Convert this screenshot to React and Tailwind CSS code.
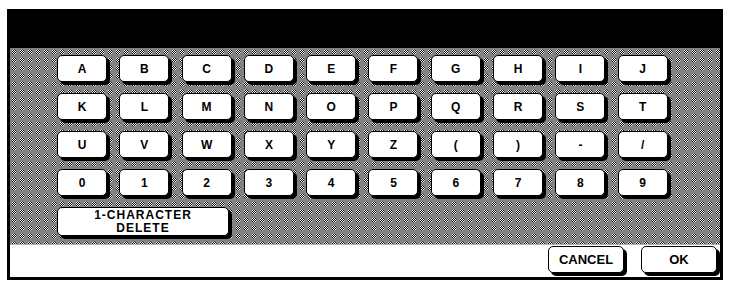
import React from 'react';

const rows = [
    ['A', 'B', 'C', 'D', 'E', 'F', 'G', 'H', 'I', 'J'],
    ['K', 'L', 'M', 'N', 'O', 'P', 'Q', 'R', 'S', 'T'],
    ['U', 'V', 'W', 'X', 'Y', 'Z', '(', ')', '-', '/'],
    ['0', '1', '2', '3', '4', '5', '6', '7', '8', '9'],
];

function Key({ children, className = 'w-[50px] h-[27px] leading-[12px]' }) {
    return (
        <button
            className={`${className} shrink-0 rounded-[5px] border border-black bg-white shadow-[3px_3px_0_#000] flex flex-col items-center justify-center text-[12px] font-bold text-black`}
        >
            {children}
        </button>
    );
}

export default function App() {
    return (
        <div className="w-[732px] h-[287px] bg-white pt-[9px] pl-[7px] font-['Liberation_Sans',Arial,sans-serif]">
            <div className="w-[716px] h-[271px] bg-black px-[3px] pb-[3px] flex flex-col">
                {/* input display */}
                <div className="h-[39px] shrink-0" />

                {/* keyboard */}
                <div className="h-[196px] shrink-0 pt-[7px] pl-[47px] flex flex-col gap-y-[11px] bg-[image:radial-gradient(circle,transparent_2px,#828282_3px),conic-gradient(#000_25%,#fff_0_50%,#000_0_75%,#fff_0)] bg-size-[8px_8px,2px_2px]">
                    {rows.map((row, i) => (
                        <div key={i} className="flex gap-x-[12.3px]">
                            {row.map(ch => (
                                <Key key={ch}>{ch}</Key>
                            ))}
                        </div>
                    ))}
                    <div className="flex">
                        <Key className="w-[172px] h-[29px] leading-[13px] tracking-[1px]">
                            <span>1-CHARACTER</span>
                            <span>DELETE</span>
                        </Key>
                    </div>
                </div>

                {/* actions */}
                <div className="flex-1 bg-white border-t border-[#b0b0b0] flex justify-end items-start pt-[1px] pr-[3px] gap-x-[17px]">
                    <Key className="w-[76px] h-[27px] leading-[12px] text-[13px]">CANCEL</Key>
                    <Key className="w-[76px] h-[27px] leading-[12px] text-[13px]">OK</Key>
                </div>
            </div>
        </div>
    );
}
